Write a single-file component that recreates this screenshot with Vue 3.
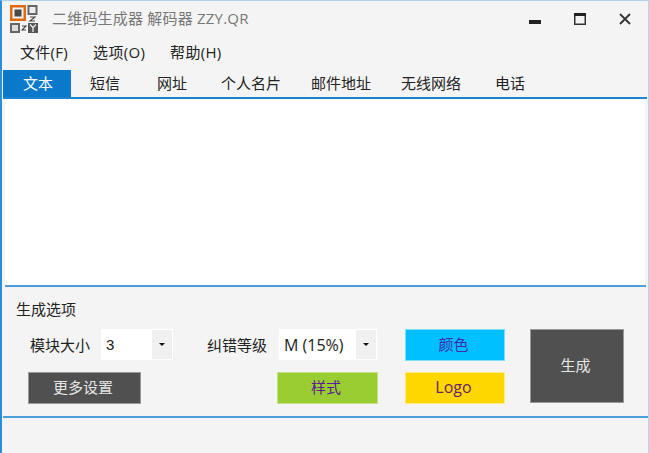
<script setup>
const menus = ['文件(F)', '选项(O)', '帮助(H)']
const tabs = [
  { label: '文本', width: 68 },
  { label: '短信', width: 68 },
  { label: '网址', width: 66 },
  { label: '个人名片', width: 92 },
  { label: '邮件地址', width: 88 },
  { label: '无线网络', width: 92 },
  { label: '电话', width: 66 }
]
</script>

<template>
  <div class="window">
    <header class="titlebar">
      <svg class="logo" width="28" height="28" viewBox="0 0 28 28">
        <rect x="0" y="0" width="16" height="16" fill="#e06a12" />
        <rect x="2.5" y="2.5" width="11" height="11" fill="#f4f4f4" />
        <rect x="4.5" y="4.5" width="7" height="7" fill="#4a4a4a" />
        <rect x="17.5" y="0" width="10" height="10" fill="#666" />
        <rect x="19.5" y="2" width="6" height="6" fill="#eee" />
        <rect x="0" y="18" width="10" height="10" fill="#666" />
        <rect x="2" y="20" width="6" height="6" fill="#ddd" />
        <path d="M20 12h5l-5 4h5M12 21h4l-4 4h4" stroke="#444" stroke-width="1.1" fill="none" />
        <rect x="18" y="18" width="10" height="10" fill="#555" />
        <path d="M20 19.5l3 3 3-3M23 22.5V27" stroke="#eee" stroke-width="1.3" fill="none" />
      </svg>
      <span class="title">二维码生成器 解码器 ZZY.QR</span>
      <div class="controls">
        <svg width="12" height="12" viewBox="0 0 12 12"><rect x="0" y="7" width="12" height="4" fill="#222" /></svg>
        <svg width="12" height="12" viewBox="0 0 12 12"><rect x="0.75" y="0.75" width="10.5" height="10.5" fill="none" stroke="#333" stroke-width="1.5" /><rect x="0" y="0" width="12" height="3" fill="#222" /></svg>
        <svg width="12" height="12" viewBox="0 0 12 12"><path d="M1 1l10 10M11 1L1 11" stroke="#333" stroke-width="1.8" fill="none" /></svg>
      </div>
    </header>

    <nav class="menu">
      <span v-for="m in menus" :key="m" class="menu-item">{{ m }}</span>
    </nav>

    <div class="tabs">
      <span
        v-for="(t, i) in tabs"
        :key="t.label"
        class="tab"
        :class="{ active: i === 0 }"
        :style="{ width: t.width + 'px' }"
      >{{ t.label }}</span>
    </div>

    <div class="editor"></div>
    <div class="rule upper"></div>

    <section class="options">
      <div class="options-title">生成选项</div>
      <div class="options-grid">
        <div class="col-left">
          <div class="field">
            <span class="label">模块大小</span>
            <div class="combo small"><span class="value mono">3</span><span class="arrow"></span></div>
          </div>
          <button class="btn dark more">更多设置</button>
        </div>
        <div class="col-mid">
          <div class="field">
            <span class="label">纠错等级</span>
            <div class="combo wide"><span class="value latin">M (15%)</span><span class="arrow"></span></div>
          </div>
          <button class="btn style">样式</button>
        </div>
        <div class="col-right">
          <button class="btn color">颜色</button>
          <button class="btn logo-btn">Logo</button>
        </div>
        <button class="btn dark generate">生成</button>
      </div>
    </section>

    <div class="rule lower"></div>
    <div class="statusbar"></div>
  </div>
</template>

<style scoped>
.window {
  width: 649px;
  height: 453px;
  box-sizing: border-box;
  background: #f4f4f4;
  border-top: 1px solid #a9d0ec;
  border-left: 2px solid #2b8fd8;
  border-right: 1px solid #b4d6ee;
  font-family: "Open Sans", "Noto Sans CJK SC", sans-serif;
  font-size: 15px;
  color: #222;
  display: flex;
  flex-direction: column;
  overflow: hidden;
}
.titlebar {
  height: 37px;
  display: flex;
  align-items: center;
  padding-left: 8px;
  flex: none;
}
.logo { flex: none; margin-top: -1px; }
.title {
  margin-left: 14px;
  margin-top: -3px;
  color: #777;
  line-height: 20px;
  letter-spacing: 0.2px;
}
.controls {
  margin-left: auto;
  display: flex;
  align-items: center;
  gap: 33px;
  padding-right: 17px;
  margin-top: -2px;
}
.menu {
  height: 28px;
  padding-bottom: 2px;
  margin-bottom: 2px;
  display: flex;
  align-items: center;
  padding-left: 18px;
  gap: 25px;
  flex: none;
}
.menu-item { line-height: 20px; letter-spacing: 0.3px; }
.tabs {
  height: 29px;
  box-sizing: border-box;
  display: flex;
  margin-left: 1px;
  margin-right: 1px;
  border-bottom: 2px solid #1c84d3;
  flex: none;
}
.tab {
  display: flex;
  align-items: center;
  justify-content: center;
  line-height: 20px;
  height: 27px;
  box-sizing: border-box;
  padding-bottom: 2px;
}
.tab.active {
  background: #0a79cc;
  color: #fff;
  padding-left: 2px;
}
.editor {
  height: 186px;
  background: #fff;
  margin: 0 3px;
  flex: none;
}
.rule { height: 2px; background: #4d9fdc; flex: none; }
.rule.upper { margin: 0 2px 0 3px; }
.rule.lower { margin-left: 1px; }
.options {
  height: 129px;
  box-sizing: border-box;
  padding: 12px 0 0 14px;
  flex: none;
}
.options-title { line-height: 20px; height: 20px; }
.options-grid {
  display: flex;
  margin-top: 10px;
  margin-left: 12px;
}
.col-left, .col-mid {
  display: flex;
  flex-direction: column;
  gap: 12px;
}
.col-left { width: 177px; }
.col-mid { width: 200px; align-items: flex-start; }
.col-right {
  width: 125px;
  display: flex;
  flex-direction: column;
  gap: 11px;
}
.field { display: flex; align-items: center; height: 31px; }
.label { line-height: 20px; margin-left: 2px; width: 71px; }
.combo {
  height: 31px;
  background: #fff;
  display: flex;
  align-items: center;
  box-sizing: border-box;
  padding: 1px;
}
.combo.small { width: 72px; }
.combo.wide { width: 98px; margin-left: 1px; }
.value { flex: 1; padding-left: 4px; line-height: 20px; }
.mono { font-family: "Liberation Sans", sans-serif; }
.latin { font-size: 16px; }
.arrow {
  width: 20px;
  height: 29px;
  background: #f0f0f0;
  position: relative;
  flex: none;
}
.arrow::after {
  content: "";
  position: absolute;
  left: 7px;
  top: 13px;
  border-left: 3px solid transparent;
  border-right: 3px solid transparent;
  border-top: 3px solid #111;
}
.btn {
  font: inherit;
  line-height: 20px;
  padding: 0 3px 2px 0;
  border: 1px solid transparent;
  box-sizing: border-box;
}
.btn.dark { background: #505050; color: #e6e6e6; border-color: #999; }
.more { width: 113px; height: 32px; }
.style { width: 101px; height: 32px; margin-left: 72px; background: #9acd32; color: #5b1a96; border-color: #c6e08a; }
.color { width: 100px; height: 32px; background: #00bfff; color: #3c2bb0; border-color: #7fdcfb; }
.logo-btn { width: 100px; height: 32px; background: #ffd700; color: #6a1f6a; border-color: #ffe97a; font-size: 16px; }
.generate { width: 94px; height: 74px; }
.statusbar { flex: 1; }
</style>
